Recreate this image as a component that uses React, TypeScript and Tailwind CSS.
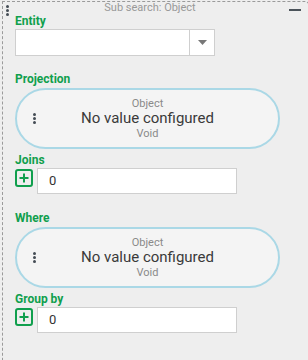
import React from "react";

const Label = ({ children, className = "" }: { children: React.ReactNode; className?: string }) => (
  <div className={`text-[12px] font-bold leading-[14px] text-[#109f4d] ${className}`}>{children}</div>
);

const DragDots = ({ className = "" }: { className?: string }) => (
  <div className={`flex flex-col gap-[1px] ${className}`}>
    <span className="h-[3px] w-[3px] rounded-full bg-[#444c54]" />
    <span className="h-[3px] w-[3px] rounded-full bg-[#444c54]" />
    <span className="h-[3px] w-[3px] rounded-full bg-[#444c54]" />
  </div>
);

const EmptyValue = ({ className = "" }: { className?: string }) => (
  <div
    className={`relative flex h-[61px] w-[265px] flex-col items-center justify-center rounded-full border-2 border-[#aad8e6] bg-[#f4f4f4] ${className}`}
  >
    <DragDots className="absolute left-[16px] top-[23px]" />
    <div className="text-[11px] leading-[15px] text-[#8a8a8a]">Object</div>
    <div className="text-[15px] leading-[15px] text-[#3a3a3a]">No value configured</div>
    <div className="text-[11px] leading-[15px] text-[#8a8a8a]">Void</div>
  </div>
);

const AddRow = ({ value }: { value: string }) => (
  <div className="flex items-start gap-[4px]">
    <button className="mt-[1px] flex h-[18px] w-[18px] items-center justify-center rounded-[3px] border-2 border-[#109f4d] bg-[#eeeeee]">
      <svg width="10" height="10" viewBox="0 0 10 10">
        <path d="M5 0.5v9M0.5 5h9" stroke="#109f4d" strokeWidth="2" />
      </svg>
    </button>
    <div className="flex h-[26px] w-[200px] items-center border border-[#cfcfcf] bg-white pl-[11px] text-[13px] text-[#333]">
      {value}
    </div>
  </div>
);

export default function App() {
  return (
    <div className="h-[360px] w-[308px] overflow-hidden bg-[#eeeeee] font-['Roboto',sans-serif]">
      <div className="ml-[2px] mt-[1px] h-[400px] w-[307px] rounded-tr-[4px] border border-dashed border-[#9a9a9a] pl-[12px]">
        <div className="relative h-[12px] w-[286px]">
          <DragDots className="absolute -left-[9px] top-[3px]" />
          <div className="pr-[16px] text-center text-[11px] leading-[12px] text-[#999]">Sub search: Object</div>
          <div className="absolute right-[0px] top-[7px] h-[2px] w-[12px] bg-[#4b535a]" />
        </div>

        <Label>Entity</Label>
        <div className="mt-[1px] flex h-[27px] w-[200px] border border-[#cfcfcf] bg-white">
          <div className="flex-1" />
          <div className="flex w-[25px] items-center justify-center border-l border-[#cfcfcf]">
            <svg width="9" height="5" viewBox="0 0 9 5">
              <path d="M0 0h9L4.5 5z" fill="#777" />
            </svg>
          </div>
        </div>

        <Label className="mt-[16px]">Projection</Label>
        <EmptyValue className="mt-[2px]" />

        <Label className="mt-[4px]">Joins</Label>
        <div className="mt-[1px]">
          <AddRow value="0" />
        </div>

        <Label className="mt-[17px]">Where</Label>
        <EmptyValue className="mt-[2px]" />

        <Label className="mt-[4px]">Group by</Label>
        <div className="mt-[1px]">
          <AddRow value="0" />
        </div>
      </div>
    </div>
  );
}
